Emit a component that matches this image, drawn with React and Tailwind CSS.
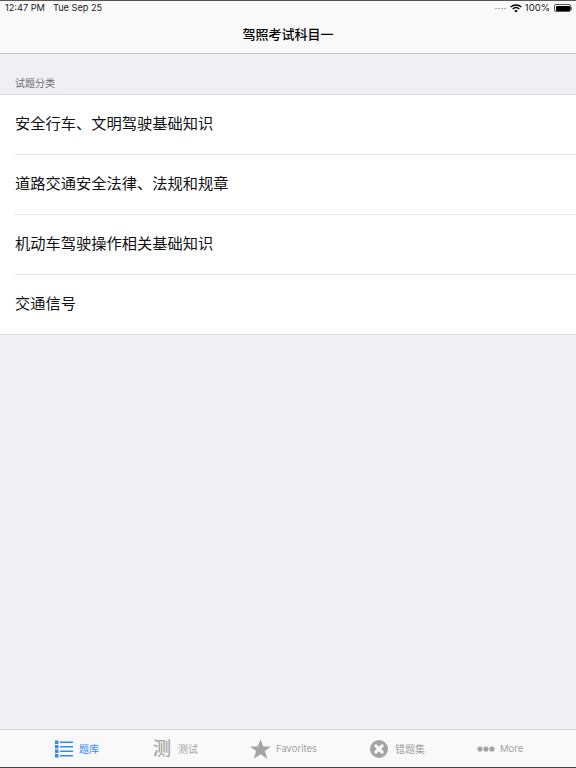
import React from "react";

const rows = ["安全行车、文明驾驶基础知识", "道路交通安全法律、法规和规章", "机动车驾驶操作相关基础知识", "交通信号"];
const font = "font-['Inter','Noto_Sans_CJK_SC',sans-serif]";

function Tab({ icon, label, color = "text-[#a3a3a3]", gap = "gap-[7px]", text = "text-[10px]", ml = "" }) {
  return (
    <div className={`flex items-center justify-center ${gap} ${color} ${ml}`}>
      {icon}
      <span className={`${text} leading-[12px]`}>{label}</span>
    </div>
  );
}

export default function App() {
  return (
    <div className={`flex h-[768px] w-[576px] flex-col overflow-hidden bg-[#efeff4] ${font}`}>
      <header className="h-[54px] shrink-0 border-t border-b border-t-[#555] border-b-[#c4c4c6] bg-[#f9f9f9]">
        <div className="flex h-[14px] items-center justify-between pl-[5px] pr-[4px] text-[9.2px] text-[#1a1a1a]">
          <div className="flex gap-[8px]"><span>12:47 PM</span><span>Tue Sep 25</span></div>
          <div className="flex items-center gap-[3px]">
            <span className="mr-[1px] flex gap-[1px]">
              {[0, 1, 2, 3].map((i) => <span key={i} className="h-[1px] w-[2px] bg-[#aaa]" />)}
            </span>
            <svg width="12" height="9" viewBox="0 0 12 9" fill="none" stroke="#000" strokeWidth="1.500"><path d="M.7 3a7.800 7.800 0 0 1 10.600 0M2.700 5a5 5 0 0 1 6.600 0" /><path d="M4.200 6.700 6 8.600l1.800-1.900a2.700 2.700 0 0 0-3.600 0z" fill="#000" stroke="none" /></svg>
            <span className="text-[9.500px]">100%</span>
            <div className="flex items-center">
              <div className="ml-[1px] h-[8px] w-[17px] rounded-[2px] border border-[#555] p-[0.5px]"><div className="h-full w-full rounded-[1px] bg-black" /></div>
              <div className="h-[3px] w-[1px] bg-[#777]" />
            </div>
          </div>
        </div>
        <div className="flex h-[38px] items-center justify-center pt-[1px] text-[13px] font-medium text-black">驾照考试科目一</div>
      </header>
      <div className="flex h-[40px] shrink-0 items-end px-[15px] pb-[4px] text-[10px] leading-[14px] text-[#6d6d72]">试题分类</div>
      <div className="shrink-0 border-t border-b border-[#dcdce0] bg-white">
        {rows.map((r, i) => (
          <div key={r} className="pl-[15px]">
            <div className={`flex items-center text-[15.25px] text-[#111] ${i === 3 ? "h-[59px]" : "h-[60px] border-b border-[#e6e6e8]"}`}>{r}</div>
          </div>
        ))}
      </div>
      <div className="flex-1" />
      <footer className="flex h-[39px] shrink-0 items-center border-t border-b border-t-[#d4d4d6] border-b-[#444] bg-[#f9f9f9] pl-[55px]">
        <Tab color="text-[#2f8cf5]" gap="gap-[6px]" label="题库" icon={<svg width="18" height="18" viewBox="0 0 18 18" fill="currentColor"><path d="M0 .5h3.500V4H0zM0 5h3.500v3.500H0zM0 9.500h3.500V13H0zM0 14h3.500v3.500H0zM5 1.500h13v1.500H5zM5 6h13v1.500H5zM5 10.500h13V12H5zM5 15h13v1.500H5z" /></svg>} />
        <Tab ml="ml-[54px]" label="测试" icon={<span className="text-[18px] font-medium leading-none">测</span>} />
        <Tab ml="ml-[52px]" gap="gap-[5px]" text="text-[9.500px]" label="Favorites" icon={<svg width="21" height="20" viewBox="0 0 24 22" fill="currentColor"><path d="m12 0 3.200 8H24l-7 5.400 2.600 8.600L12 17l-7.600 5L7 13.400 0 8h8.800z" /></svg>} />
        <Tab ml="ml-[53px]" label="错题集" icon={<svg width="18" height="18" viewBox="0 0 20 20"><circle cx="10" cy="10" r="10" fill="currentColor" /><path d="m6.500 6.500 7 7M13.500 6.500l-7 7" stroke="#f9f9f9" strokeWidth="3.500" strokeLinecap="round" /></svg>} />
        <Tab ml="ml-[52px]" gap="gap-[5px]" text="text-[9.500px]" label="More" icon={<svg width="18" height="6" viewBox="0 0 18 6" fill="currentColor"><circle cx="3" cy="3" r="2.600" /><circle cx="9" cy="3" r="2.600" /><circle cx="15" cy="3" r="2.600" /></svg>} />
      </footer>
    </div>
  );
}
